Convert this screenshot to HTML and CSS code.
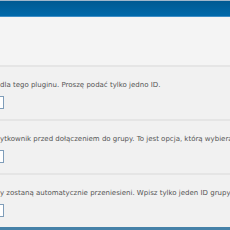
FILE: index.html
```html
<!DOCTYPE html>
<html>
<head>
<meta charset="utf-8">
<link rel="stylesheet" href="styles.css">
</head>
<body>
<div class="topbar"></div>
<div class="intro"></div>
<div class="section">
  <p class="desc">dla tego pluginu. Proszę podać tylko jedno ID.</p>
  <input class="field" type="text">
</div>
<div class="section">
  <p class="desc">ytkownik przed dołączeniem do grupy. To jest opcja, którą wybiera</p>
  <input class="field" type="text">
</div>
<div class="section">
  <p class="desc">y zostaną automatycznie przeniesieni. Wpisz tylko jeden ID grupy</p>
  <input class="field" type="text">
</div>
<div class="footer"></div>
</body>
</html>
```
FILE: styles.css
```css
html, body {
  margin: 0;
  padding: 0;
  width: 230px;
  height: 230px;
  overflow: hidden;
  background: #f1f1f1;
  font-family: "DejaVu Sans", Verdana, sans-serif;
}
.topbar {
  height: 15px;
  border-top: 1px solid #9fb7cb;
  border-bottom: 1px solid #3d8dc5;
  background: linear-gradient(#005a92, #0069aa);
}
.intro {
  height: 48px;
  background: #f4f4f4;
}
.section {
  border-top: 2px solid #e5e5e5;
  height: 52px;
  padding-top: 13px;
  box-sizing: border-box;
  height: 54px;
}
.desc {
  margin: 0;
  font-size: 7px;
  line-height: 10px;
  color: #555;
  white-space: nowrap;
}
.field {
  display: block;
  margin: 6px 0 0 -36px;
  width: 40px;
  height: 13px;
  box-sizing: border-box;
  border: 1px solid #7f9db9;
  background: #fff;
  padding: 0;
}
.footer {
  height: 3px;
  background: #4682a8;
}
```
